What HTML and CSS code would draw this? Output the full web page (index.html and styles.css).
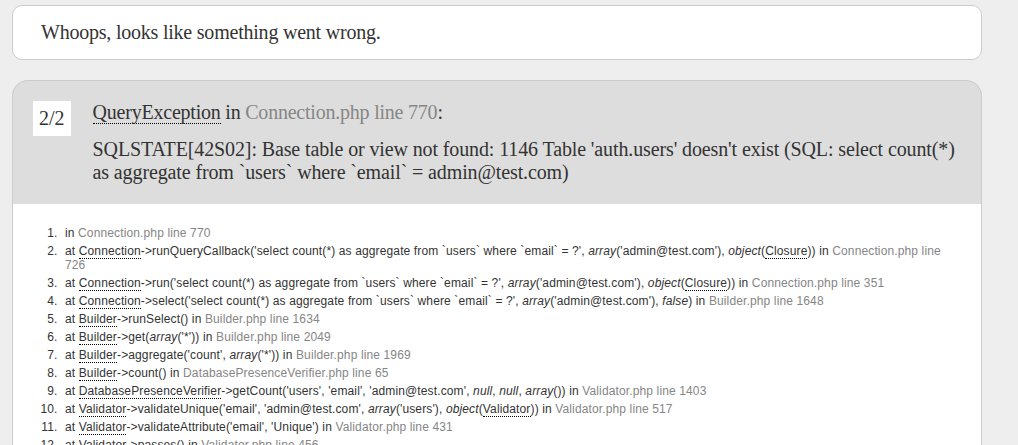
FILE: index.html
```html
<!DOCTYPE html>
<html>
<head>
<meta charset="utf-8">
<title>Whoops, looks like something went wrong.</title>
<link rel="stylesheet" href="styles.css">
</head>
<body>
<div class="page">
  <h1 class="headline">Whoops, looks like something went wrong.</h1>

  <h2 class="block-exception">
    <span class="counter">2/2</span>
    <div class="exception-text">
      <span class="exception-title"><abbr title="Illuminate\Database\QueryException">QueryException</abbr> in <a class="file" title="Connection.php line 770">Connection.php line 770</a>:</span>
      <span class="exception-message">SQLSTATE[42S02]: Base table or view not found: 1146 Table 'auth.users' doesn't exist (SQL: select count(*) as aggregate from `users` where `email` = admin@test.com)</span>
    </div>
  </h2>

  <div class="block">
    <ol class="traces">
      <li>in <a class="file">Connection.php line 770</a></li>
      <li>at <abbr>Connection</abbr>-&gt;runQueryCallback('select count(*) as aggregate from `users` where `email` = ?', <em>array</em>('admin@test.com'), <em>object</em>(<abbr>Closure</abbr>)) in <a class="file">Connection.php line 726</a></li>
      <li>at <abbr>Connection</abbr>-&gt;run('select count(*) as aggregate from `users` where `email` = ?', <em>array</em>('admin@test.com'), <em>object</em>(<abbr>Closure</abbr>)) in <a class="file">Connection.php line 351</a></li>
      <li>at <abbr>Connection</abbr>-&gt;select('select count(*) as aggregate from `users` where `email` = ?', <em>array</em>('admin@test.com'), <em>false</em>) in <a class="file">Builder.php line 1648</a></li>
      <li>at <abbr>Builder</abbr>-&gt;runSelect() in <a class="file">Builder.php line 1634</a></li>
      <li>at <abbr>Builder</abbr>-&gt;get(<em>array</em>('*')) in <a class="file">Builder.php line 2049</a></li>
      <li>at <abbr>Builder</abbr>-&gt;aggregate('count', <em>array</em>('*')) in <a class="file">Builder.php line 1969</a></li>
      <li>at <abbr>Builder</abbr>-&gt;count() in <a class="file">DatabasePresenceVerifier.php line 65</a></li>
      <li>at <abbr>DatabasePresenceVerifier</abbr>-&gt;getCount('users', 'email', 'admin@test.com', <em>null</em>, <em>null</em>, <em>array</em>()) in <a class="file">Validator.php line 1403</a></li>
      <li>at <abbr>Validator</abbr>-&gt;validateUnique('email', 'admin@test.com', <em>array</em>('users'), <em>object</em>(<abbr>Validator</abbr>)) in <a class="file">Validator.php line 517</a></li>
      <li>at <abbr>Validator</abbr>-&gt;validateAttribute('email', 'Unique') in <a class="file">Validator.php line 431</a></li>
      <li>at <abbr>Validator</abbr>-&gt;passes() in <a class="file">Validator.php line 456</a></li>
      <li>at <abbr>Validator</abbr>-&gt;fails() in <a class="file">ValidatesRequests.php line 53</a></li>
      <li>at <abbr>Controller</abbr>-&gt;validate(<em>object</em>(<abbr>Request</abbr>), <em>array</em>('name' =&gt; 'required|max:255', 'email' =&gt; 'required|email|max:255|unique:users')) in <a class="file">AuthController.php line 37</a></li>
    </ol>
  </div>
</div>
</body>
</html>
```

FILE: styles.css
```css
html {
  background: #eee;
  padding: 5px 0 10px 12px;
  scrollbar-width: none;
}
html::-webkit-scrollbar { display: none; }

body {
  margin: 0;
  padding: 0;
  font: 11px "Liberation Sans", Arial, sans-serif;
  color: #333;
}

.page {
  width: 970px;
}

.headline {
  margin: 0 0 20px 0;
  padding: 15px 28px;
  background: #fff;
  border: 1px solid #ccc;
  border-radius: 10px;
  font: 20px "Liberation Serif", "Times New Roman", serif;
  font-weight: normal;
  letter-spacing: -0.22px;
  color: #333;
}

.block-exception {
  margin: 0;
  padding: 20px;
  display: flex;
  align-items: flex-start;
  background: #ddd;
  color: #333;
  border: 1px solid #ccc;
  border-bottom: none;
  border-radius: 16px 16px 0 0;
  font: 20px "Liberation Serif", "Times New Roman", serif;
  font-weight: normal;
  letter-spacing: -0.22px;
  overflow-wrap: break-word;
}

.counter {
  flex: none;
  background: #fff;
  color: #333;
  padding: 6px;
  letter-spacing: 0;
}

.exception-text {
  margin-left: 22px;
  flex: 1;
  min-width: 0;
}

.exception-title {
  display: block;
  margin-bottom: 14px;
}

.exception-message {
  display: block;
  letter-spacing: -0.12px;
}

abbr {
  text-decoration: none;
  border-bottom: 1px dotted #000;
  cursor: help;
}

a.file {
  color: #868686;
  text-decoration: none;
}

em {
  font-style: italic;
}

.block {
  background: #fff;
  padding: 10px 28px;
  margin-bottom: 20px;
  border: 1px solid #ccc;
  border-top: none;
  border-radius: 0 0 16px 16px;
}

.traces {
  margin: 0;
  padding: 10px 0;
}

.traces li {
  font-size: 12px;
  letter-spacing: 0.13px;
  padding: 2px 4px;
  margin-left: 20px;
  list-style-type: decimal;
}
```
